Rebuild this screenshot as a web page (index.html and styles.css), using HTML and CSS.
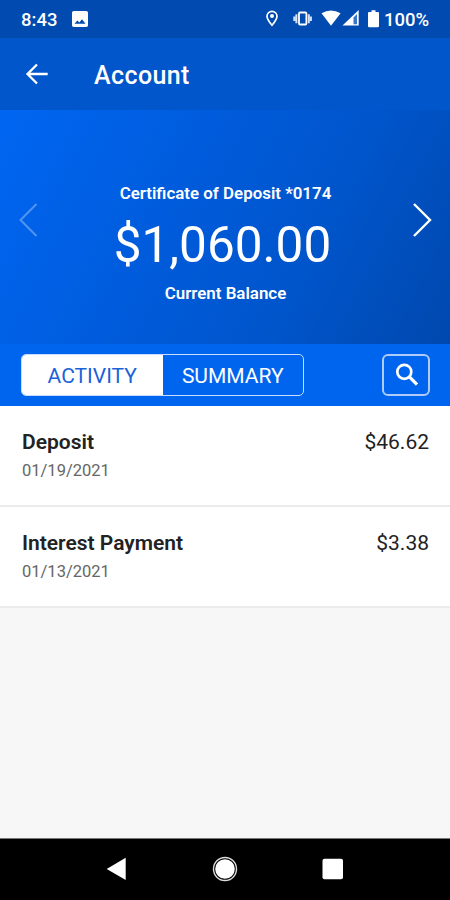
FILE: index.html
```html
<!DOCTYPE html>
<html lang="en">
<head>
<meta charset="utf-8">
<title>Account</title>
<link rel="stylesheet" href="styles.css">
</head>
<body>
<div class="status">
  <span class="time">8:43</span>
  <svg class="photo" width="16" height="16" viewBox="0 0 16 16"><path fill="#fff" fill-rule="evenodd" d="M1.700 0h12.600q1.700 0 1.700 1.700v12.600q0 1.700-1.700 1.700H1.700Q0 16 0 14.300V1.700Q0 0 1.700 0zM2.500 12.700h11L10 8.300l-2.700 3.200-1.900-2z"/></svg>
  <svg class="signals" width="108" height="20" viewBox="0 0 108 20">
    <path d="M7 2.300a5 5 0 0 0-5 5c0 3.200 5 9 5 9s5-5.800 5-9a5 5 0 0 0-5-5z" fill="none" stroke="#fff" stroke-width="1.700"/>
    <circle cx="7" cy="7" r="2" fill="#fff"/>
    <path d="M29.300 7.500v4.500M31.400 5.200v9M43.800 5.200v9M45.900 7.500v4.500" stroke="#d5e3fa" stroke-width="2"/>
    <rect x="34" y="3.500" width="7.400" height="12" rx="1" fill="none" stroke="#fff" stroke-width="1.800"/>
    <path d="M56.500 4.300Q66 -1.300 75.600 4.300L66 16.800z" fill="#fff"/>
    <path d="M77.500 16.600 93.700 1v15.600z" fill="#fff"/>
    <path d="M88.500 8.500v6.700h3.500V5z" fill="#3a75cb"/>
  </svg>
  <svg class="battery" width="11" height="18" viewBox="0 0 11 18"><path d="M1 2h2.500V.3h4V2H10q1 0 1 1v13q0 1.300-1.200 1.300H1.200Q0 17.300 0 16V3q0-1 1-1z" fill="#fff"/></svg>
  <span class="percent">100%</span>
</div>
<header class="bar">
  <svg width="24" height="22" viewBox="0 0 24 22"><path d="M22.700 11H3M12 1.500 2.500 11l9.500 9.500" fill="none" stroke="#fff" stroke-width="2.300"/></svg>
  <h1>Account</h1>
</header>
<section class="hero">
  <svg width="20" height="36" viewBox="0 0 20 36"><path d="M17.500 2 1.500 18l16 16" fill="none" stroke="#fff" stroke-opacity=".32" stroke-width="2"/></svg>
  <div class="balance">
    <div class="label">Certificate of Deposit *0174</div>
    <div class="amount">$1,060.00</div>
    <div class="label current">Current Balance</div>
  </div>
  <svg width="20" height="36" viewBox="0 0 20 36"><path d="m2 2 16 16L2 34" fill="none" stroke="#fff" stroke-width="2.400"/></svg>
</section>
<nav class="tools">
  <div class="tabs"><span class="tab active">ACTIVITY</span><span class="tab">SUMMARY</span></div>
  <div class="search"><svg width="24" height="24" viewBox="0 0 24 24"><circle cx="10.300" cy="8.800" r="7" fill="none" stroke="#fff" stroke-width="2.700"/><path d="m15.200 13.700 7.800 7.800" stroke="#fff" stroke-width="3.200"/></svg></div>
</nav>
<main class="list">
  <div class="row"><div><div class="name">Deposit</div><div class="date">01/19/2021</div></div><div class="sum">$46.62</div></div>
  <div class="row"><div><div class="name">Interest Payment</div><div class="date">01/13/2021</div></div><div class="sum">$3.38</div></div>
</main>
<footer class="nav">
  <svg width="20" height="24" viewBox="0 0 20 24"><path d="M19.700.7v22.300L.7 12z" fill="#fff"/></svg>
  <svg width="26" height="26" viewBox="0 0 26 26"><circle cx="13" cy="13" r="11.500" fill="none" stroke="#ddd" stroke-width="1.400"/><circle cx="13" cy="13" r="9.800" fill="#fff"/></svg>
  <svg width="22" height="22" viewBox="0 0 22 22"><rect x=".5" y=".7" width="20.500" height="20.500" rx="2" fill="#fff"/></svg>
</footer>
</body>
</html>
```
FILE: styles.css
```css
* { box-sizing: border-box; }
body {
  margin: 0;
  height: 900px;
  display: flex;
  flex-direction: column;
  font-family: Roboto, "Liberation Sans", sans-serif;
  background: #f7f7f7;
  color: #fff;
  overflow: hidden;
}
svg { display: block; flex: none; }
.status {
  height: 38px;
  flex: none;
  display: flex;
  align-items: center;
  padding: 0 19px 0 21px;
  background: #004ab0;
  font-size: 18.5px;
  font-weight: 500;
  line-height: 22px;
}
.time { width: 51px; padding-top: 2px; }
.signals { margin-left: auto; margin-right: -5px; }
.battery { margin-right: 5px; }
.percent { width: 47px; padding-top: 2px; }
.bar {
  height: 72px;
  flex: none;
  display: flex;
  align-items: center;
  gap: 45px;
  padding-left: 25px;
  background: #0056ca;
}
h1 { margin: 3px 0 0; font-size: 25px; line-height: 30px; font-weight: 500; letter-spacing: .4px; }
.hero {
  height: 234px;
  flex: none;
  display: flex;
  justify-content: space-between;
  padding: 0 18px 0 19px;
  background: linear-gradient(117deg, #0066f2 0%, #005ad8 45%, #0055cb 67%, #0048ae 100%);
}
.hero svg { margin-top: 92px; }
.balance { text-align: center; padding-top: 73px; }
.label { font-size: 16.900px; line-height: 20px; font-weight: 600; }
.amount { font-size: 49.500px; line-height: 58px; margin-top: 13px; margin-left: -6px; }
.current { margin-top: 9px; }
.tools {
  height: 62px;
  flex: none;
  display: flex;
  justify-content: space-between;
  padding: 10px 20px 10px 21px;
  background: #0065ee;
}
.tabs {
  width: 283px;
  display: flex;
  border: 1.500px solid #c8dcfb;
  border-radius: 5px;
  overflow: hidden;
}
.tab {
  flex: 1;
  text-align: center;
  font-size: 21px;
  line-height: 43px;
}
.active { background: #fff; color: #1b61d8; }
.search {
  width: 48px;
  border: 2px solid #aecbf9;
  border-radius: 6px;
  display: flex;
  justify-content: center;
  padding-top: 7px;
}
.list { flex: 1; }
.row {
  height: 101px;
  display: flex;
  justify-content: space-between;
  padding: 24px 21px 0 22px;
  background: #fff;
  border-bottom: 2px solid #ebebeb;
}
.name { color: #222; font-size: 21px; line-height: 25px; font-weight: 600; }
.date { color: #666; font-size: 16.500px; line-height: 20px; margin-top: 6px; }
.sum { color: #222; font-size: 21px; line-height: 25px; }
.nav {
  height: 62px;
  flex: none;
  display: flex;
  align-items: center;
  justify-content: space-between;
  padding: 0 106px 1px;
  background: #000;
  border-top: 1px solid #777;
}
.nav svg:nth-child(2) { margin-left: 2px; }
```
